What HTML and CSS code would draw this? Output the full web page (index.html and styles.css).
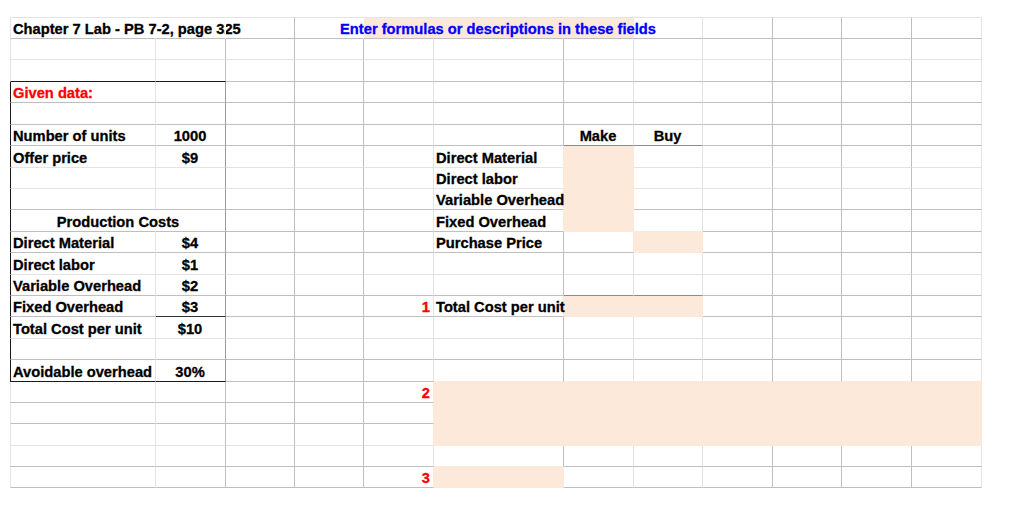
FILE: index.html
```html
<!DOCTYPE html>
<html lang="en">
<head>
<meta charset="utf-8">
<title>Chapter 7 Lab - PB 7-2</title>
<link rel="stylesheet" href="styles.css">
</head>
<body>
<div class="sheet">
  <div class="row h22 first">
    <div class="nr">Chapter 7 Lab - PB 7-2, page 325</div><div class="nr"></div><div></div><div class="nr"></div>
    <div class="pc1"></div><div class="pc1 ctr"><span class="blue over">Enter formulas or descriptions in these fields</span></div><div class="pc1"></div>
    <div></div><div></div><div></div><div></div><div></div>
  </div>
  <div class="row h21 lt">
    <div></div><div></div><div></div><div></div><div></div><div></div><div></div><div></div><div></div><div></div><div></div><div></div>
  </div>
  <div class="row h22">
    <div class="bb"></div><div class="bb"></div><div></div><div></div><div></div><div></div><div></div><div></div><div></div><div></div><div></div><div></div>
  </div>
  <div class="row h21 box">
    <div class="red">Given data:</div><div></div><div></div><div></div><div></div><div></div><div></div><div></div><div></div><div></div><div></div><div></div>
  </div>
  <div class="row h22 box">
    <div></div><div></div><div></div><div></div><div></div><div></div><div></div><div></div><div></div><div></div><div></div><div></div>
  </div>
  <div class="row h21 box">
    <div>Number of units</div><div class="ctr">1000</div><div></div><div></div><div></div><div></div>
    <div class="ctr gb">Make</div><div class="ctr gb">Buy</div>
    <div></div><div></div><div></div><div></div>
  </div>
  <div class="row h22 box lt">
    <div>Offer price</div><div class="ctr">$9</div><div></div><div></div><div></div>
    <div class="pr">Direct Material</div><div class="pc"></div>
    <div></div><div></div><div></div><div></div><div></div>
  </div>
  <div class="row h21 box lt">
    <div></div><div></div><div></div><div></div><div></div>
    <div class="pr">Direct labor</div><div class="pc"></div>
    <div></div><div></div><div></div><div></div><div></div>
  </div>
  <div class="row h21 box">
    <div></div><div></div><div></div><div></div><div></div>
    <div class="pr">Variable Overhead</div><div class="pc"></div>
    <div></div><div></div><div></div><div></div><div></div>
  </div>
  <div class="row h22 box">
    <div class="nr"><span class="c2">Production Costs</span></div><div></div><div></div><div></div><div></div>
    <div class="pr">Fixed Overhead</div><div class="pc"></div><div class="pb"></div>
    <div></div><div></div><div></div><div></div>
  </div>
  <div class="row h21 box">
    <div>Direct Material</div><div class="ctr">$4</div><div></div><div></div><div></div>
    <div>Purchase Price</div><div class="pr"></div><div class="pc"></div>
    <div></div><div></div><div></div><div></div>
  </div>
  <div class="row h22 box lt">
    <div>Direct labor</div><div class="ctr">$1</div><div></div><div></div><div></div><div></div><div></div><div></div><div></div><div></div><div></div><div></div>
  </div>
  <div class="row h21 box">
    <div>Variable Overhead</div><div class="ctr">$2</div><div></div><div></div><div></div><div></div>
    <div class="gb"></div><div class="gb"></div>
    <div></div><div></div><div></div><div></div>
  </div>
  <div class="row h21 box">
    <div>Fixed Overhead</div><div class="ctr db">$3</div><div></div><div></div>
    <div class="rt red">1</div><div class="pr"><span class="over">Total Cost per unit</span></div><div class="pc"></div><div class="pc"></div>
    <div></div><div></div><div></div><div></div>
  </div>
  <div class="row h22 box lt">
    <div>Total Cost per unit</div><div class="ctr">$10</div><div></div><div></div><div></div><div></div><div></div><div></div><div></div><div></div><div></div><div></div>
  </div>
  <div class="row h21 box">
    <div></div><div></div><div></div><div></div><div></div><div></div><div></div><div></div><div></div><div></div><div></div><div></div>
  </div>
  <div class="row h22 box">
    <div class="bb">Avoidable overhead</div><div class="ctr bb">30%</div><div></div><div></div><div></div>
    <div class="pb"></div><div class="pb"></div><div class="pb"></div><div class="pb"></div><div class="pb"></div><div class="pb"></div><div class="pb"></div>
  </div>
  <div class="row h21">
    <div></div><div></div><div></div><div></div><div class="rt red pr">2</div>
    <div class="pc"></div><div class="pc"></div><div class="pc"></div><div class="pc"></div><div class="pc"></div><div class="pc"></div><div class="pc"></div>
  </div>
  <div class="row h21">
    <div></div><div></div><div></div><div></div><div class="pr"></div>
    <div class="pc"></div><div class="pc"></div><div class="pc"></div><div class="pc"></div><div class="pc"></div><div class="pc"></div><div class="pc"></div>
  </div>
  <div class="row h22 lt">
    <div></div><div></div><div></div><div></div><div class="pr"></div>
    <div class="pc"></div><div class="pc"></div><div class="pc"></div><div class="pc"></div><div class="pc"></div><div class="pc"></div><div class="pc"></div>
  </div>
  <div class="row h21">
    <div></div><div></div><div></div><div></div><div></div><div class="pb"></div><div></div><div></div><div></div><div></div><div></div><div></div>
  </div>
  <div class="row h21">
    <div></div><div></div><div></div><div></div><div class="rt red pr">3</div><div class="pc"></div>
    <div></div><div></div><div></div><div></div><div></div><div></div>
  </div>
</div>
</body>
</html>
```

FILE: styles.css
```css
* { box-sizing: border-box; }
html, body { margin: 0; background: #fff; }
body {
  padding: 17px 0 0 10px;
  font-family: "Liberation Sans", Arial, sans-serif;
  font-weight: bold;
  font-size: 14.7px;
  color: #000;
  -webkit-text-stroke: 0.3px currentColor;
}
.sheet { width: 972px; }
.row {
  display: grid;
  grid-template-columns: 146px 70px 69px 69px 70px 130px 70px 69px 70px 69px 70px 70px;
  grid-template-rows: 100%;
}
.h21 { height: 21px; }
.h22 { height: 22px; }
.row > div {
  border-right: 1px solid #bfbfbf;
  border-bottom: 1px solid #bfbfbf;
  display: flex;
  align-items: flex-end;
  padding: 0 3px 0 2px;
  white-space: nowrap;
  line-height: 17px;
  min-width: 0;
}
.row > :first-child { border-left: 1px solid #e3e3e3; }
.row > :nth-child(1),
.row > :nth-child(5),
.row > :nth-child(7),
.row > :nth-child(8),
.row > :nth-child(12) { border-right-color: #e3e3e3; }
.row.lt > div { border-bottom-color: #e3e3e3; }
.first > div { border-top: 1px solid #e3e3e3; }
.row.box > :first-child { border-left-color: #1a1a1a; }
.row.box > :nth-child(2) { border-right-color: #9a9a9a; }

.row > div.pc { background: #fde9d9; border-right-color: #fde9d9; border-bottom-color: #fde9d9; }
.row > div.pc1 { background: #fde9d9; border-right-color: #fde9d9; }
.row > div.pr { border-right-color: #fde9d9; }
.row > div.pb { border-bottom-color: #fde9d9; }
.row > div.nr { border-right-color: #fff; }
.row > div.bb { border-bottom-color: #1a1a1a; }
.row > div.gb { border-bottom-color: #8c8c8c; }
.row > div.db { border-bottom-color: #333; }

.ctr { justify-content: center; }
.rt { justify-content: flex-end; }
.red { color: #ff0000; }
.blue { color: #0000ff; }
.over { position: relative; z-index: 1; }
.c2 { flex: 0 0 214px; margin-left: -2px; text-align: center; }
```
